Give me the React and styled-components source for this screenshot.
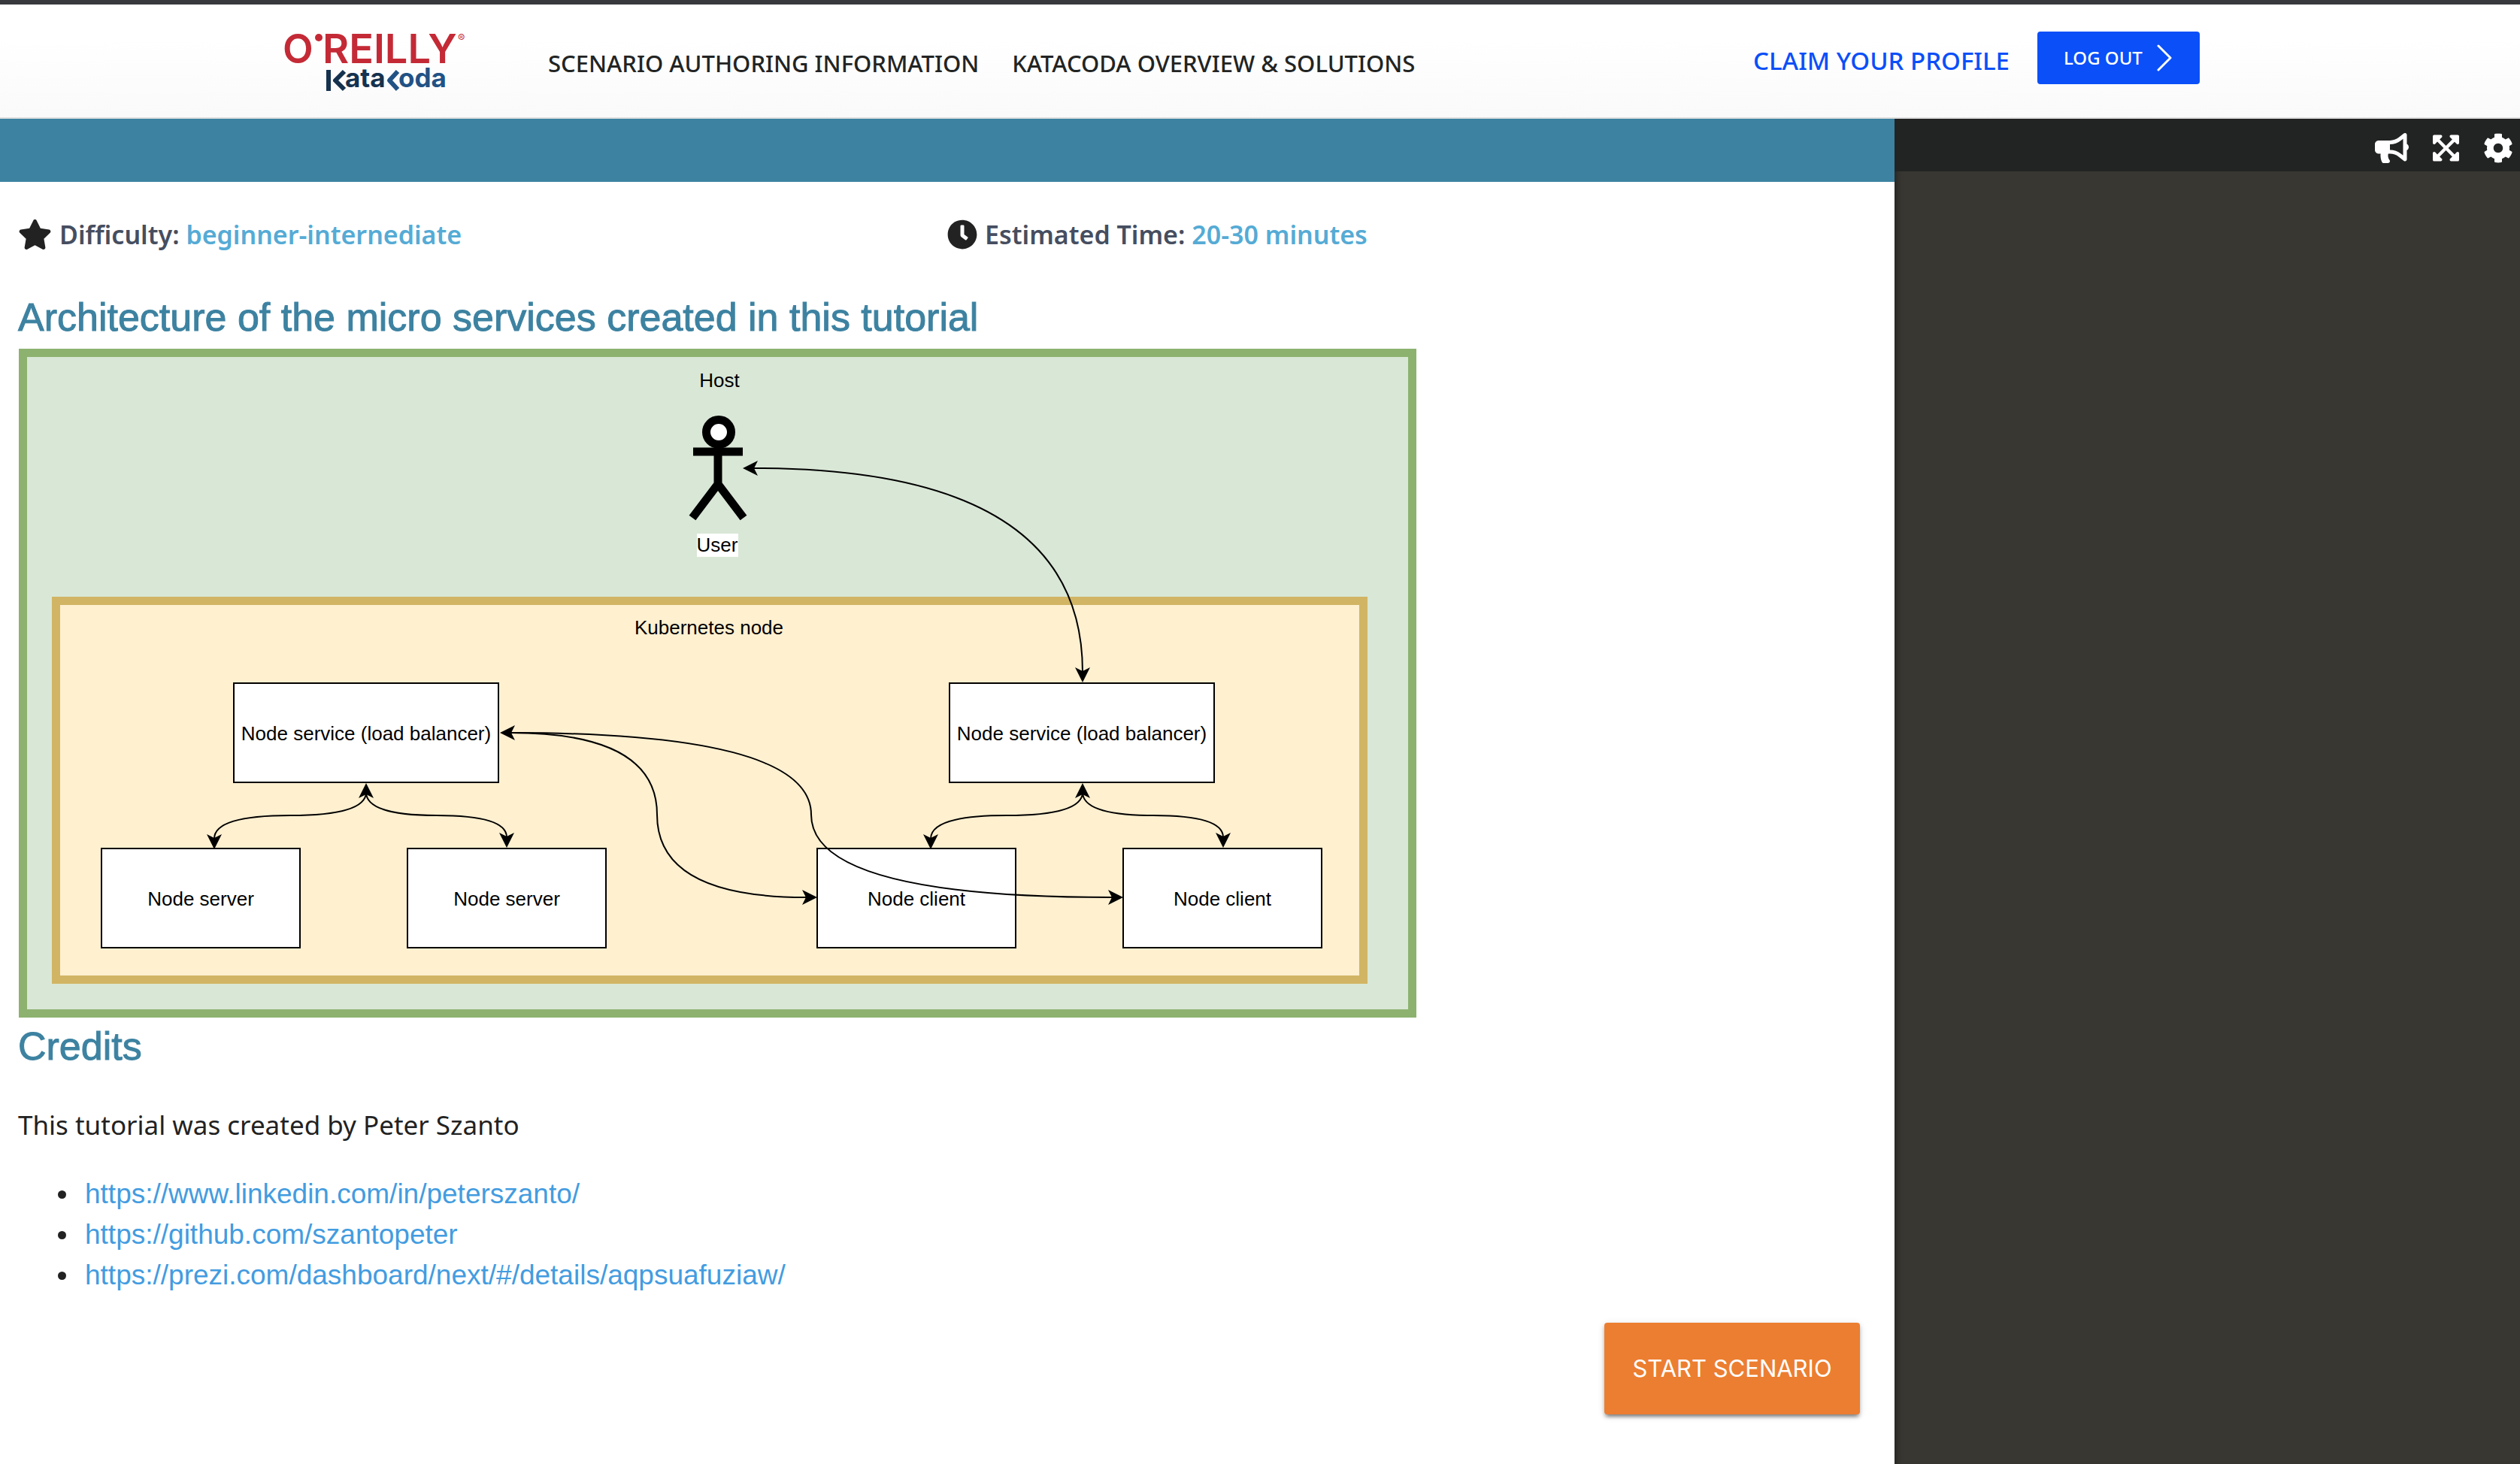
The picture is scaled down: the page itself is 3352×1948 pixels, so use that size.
import React from 'react';
import styled, { createGlobalStyle } from 'styled-components';
import { FaStar, FaClock, FaBullhorn, FaExpandArrowsAlt, FaCog } from 'react-icons/fa';

const ui = '"Noto Sans", sans-serif';
const grotesk = '"Liberation Sans", Arial, sans-serif';

const GlobalStyle = createGlobalStyle`
  *, *::before, *::after { box-sizing: border-box; }
  body { margin: 0; background: #fff; color: #222; font-family: ${ui}; }
  a { text-decoration: none; }
`;

const Page = styled.div`
  min-height: 100vh;
  display: flex;
  flex-direction: column;
`;

const Header = styled.header`
  border-top: 6px solid #37393d;
  border-bottom: 2px solid #e0e0e0;
  background: linear-gradient(#fff 30%, #fafafb);
`;

const HeaderInner = styled.div`
  display: flex;
  align-items: center;
  max-width: 2600px;
  height: 150px;
  margin: 0 auto;
`;

const LogoLink = styled.a`
  display: block;
  margin-right: 103px;

  svg {
    display: block;
  }
`;

const Nav = styled.nav`
  display: flex;
  gap: 44px;
  padding-top: 6px;
`;

const NavLink = styled.a`
  color: #222423;
  font-size: 31px;
  font-weight: 500;
  line-height: 42px;
  white-space: nowrap;
`;

const Account = styled.div`
  display: flex;
  align-items: center;
  gap: 37px;
  margin: 0 50px 8px auto;
`;

const ProfileLink = styled.a`
  padding-top: 8px;
  color: #0a4ff8;
  font-size: 33px;
  font-weight: 500;
  line-height: 42px;
  white-space: nowrap;
`;

const LogoutButton = styled.button`
  display: flex;
  align-items: center;
  justify-content: space-between;
  width: 216px;
  height: 70px;
  padding: 0 37px 0 35px;
  border: 0;
  border-radius: 4px;
  background: #0a4ff8;
  color: #fff;
  font: 500 24px/36px ${ui};
  cursor: pointer;
`;

const Workspace = styled.div`
  flex: 1;
  display: grid;
  grid-template-columns: minmax(0, 2520fr) minmax(0, 832fr);
`;

const Scenario = styled.main`
  display: flex;
  flex-direction: column;
`;

const TitleBand = styled.div`
  height: 84px;
  background: #3d82a1;
`;

const Content = styled.div`
  flex: 1;
  display: flex;
  flex-direction: column;
  padding: 48px 24px 66px;
`;

const MetaRow = styled.div`
  display: grid;
  grid-template-columns: 1fr 1fr;
  margin-bottom: 50px;
`;

const Icon = styled.span`
  display: block;
  flex: none;

  svg {
    display: block;
    width: ${(p) => p.$width || 40}px;
    height: 40px;
  }
`;

const Meta = styled.div`
  display: flex;
  align-items: center;
  gap: 10px;
  color: #464e60;
  font-size: 34px;
  font-weight: 600;
  line-height: 44px;

  svg {
    color: #222;
  }
`;

const MetaValue = styled.span`
  color: #55abd5;
`;

const Heading = styled.h2`
  margin: 0;
  padding-bottom: 4px;
  color: #3d82a1;
  font-family: ${grotesk};
  font-size: 52px;
  font-weight: 400;
  line-height: 76px;
  -webkit-text-stroke: 1px #3d82a1;
`;

const Diagram = styled.svg`
  display: block;
  width: 100%;
  max-width: 1860px;
  font-family: ${grotesk};
  font-size: 26px;
`;

const Paragraph = styled.p`
  margin: 36px 0 38px;
  font-size: 35px;
  line-height: 54px;
`;

const LinkList = styled.ul`
  margin: 0;
  padding-left: 82px;
  font-family: ${grotesk};
  font-size: 37px;
  line-height: 54px;
`;

const LinkItem = styled.li`
  padding-left: 7px;
`;

const TextLink = styled.a`
  color: #439ce0;
`;

const StartButton = styled.button`
  align-self: flex-end;
  width: 340px;
  height: 122px;
  margin: auto 22px 0 0;
  border: 0;
  border-radius: 4px;
  background: #ec7e31;
  color: #fff;
  font: 400 31px/40px Inter, sans-serif;
  box-shadow: 0 6px 4px -4px rgba(0, 0, 0, 0.3), 0 4px 4px rgba(0, 0, 0, 0.2), 0 2px 10px rgba(0, 0, 0, 0.16);
  cursor: pointer;
`;

const Terminal = styled.aside`
  background: #383732;
  box-shadow: inset 8px 0 8px -6px rgba(0, 0, 0, 0.4);
`;

const Toolbar = styled.div`
  display: flex;
  align-items: center;
  justify-content: flex-end;
  gap: 32px;
  height: 70px;
  padding: 8px 9px 0 0;
  background: #222423;
`;

const ToolButton = styled.button`
  padding: 0;
  border: 0;
  background: none;
  color: #fff;
  cursor: pointer;
`;

function Logo() {
  return (
    <svg width="250" height="112" viewBox="0 -13 250 112" role="img" aria-label="O'Reilly Katacoda">
      <g fill="#c42a36" fontFamily="Inter, sans-serif">
        <text x="0" y="46" fontSize="53" fontWeight="600">O</text>
        <circle cx="48" cy="12" r="5" />
        <text x="53" y="46" fontSize="54" fontWeight="600">REILLY</text>
        <text x="233" y="18" fontSize="14">®</text>
      </g>
      <g fill="none" strokeWidth="6" strokeLinejoin="round">
        <path d="M61 55V83" stroke="#15324f" />
        <path d="M82 57L70 69L82 81" stroke="#15324f" />
        <path d="M153 57L142 69L153 81" stroke="#215285" />
      </g>
      <g fontFamily="Inter, sans-serif" fontSize="35" fontWeight="700">
        <text x="83" y="78" fill="#15324f">ata</text>
        <text x="154" y="78" fill="#215285">oda</text>
      </g>
    </svg>
  );
}

const boxes = [
  { x: 287, y: 445, w: 352, label: 'Node service (load balancer)' },
  { x: 1239, y: 445, w: 352, label: 'Node service (load balancer)' },
  { x: 111, y: 665, w: 264, label: 'Node server' },
  { x: 518, y: 665, w: 264, label: 'Node server' },
  { x: 1063, y: 665, w: 264, label: 'Node client' },
  { x: 1470, y: 665, w: 264, label: 'Node client' },
];

const curves = [
  'M979 159Q1416 159 1416 430',
  'M463 590Q463 621 362 621Q261 621 261 652',
  'M463 590Q463 621 557 621Q650 621 650 650',
  'M1416 590Q1416 621 1315 621Q1214 621 1214 652',
  'M1416 590Q1416 621 1510 621Q1603 621 1603 650',
  'M655 511Q850 511 850 620Q850 730 1048 730',
  'M655 511Q1055 511 1055 620Q1055 730 1455 730',
];

// Tip position and rotation; 0 degrees points up.
const heads = [
  [964, 159, -90], [1416, 444, 180],
  [463, 578, 0], [261, 666, 180], [650, 664, 180],
  [1416, 578, 0], [1214, 666, 180], [1603, 664, 180],
  [641, 511, -90], [1063, 730, 90], [1470, 730, 90],
];

function Architecture() {
  return (
    <Diagram viewBox="0 0 1860 890" role="img" aria-label="Micro services architecture">
      <rect x="6.500" y="5.500" width="1848" height="879" fill="#d9e7d6" stroke="#8db270" strokeWidth="11" />
      <rect x="50.500" y="335.500" width="1739" height="504" fill="#fff0d0" stroke="#d1b564" strokeWidth="11" />
      <g fill="none" stroke="#000" strokeWidth="11">
        <circle cx="932" cy="111" r="16.500" fill="#fff" />
        <path d="M898 137H964M931 133V182M897 225L931 180L965 225" />
      </g>
      <rect x="903" y="246" width="55" height="31" fill="#fff" />
      {boxes.map((b) => (
        <rect key={b.x} x={b.x} y={b.y} width={b.w} height="132" fill="#fff" stroke="#000" strokeWidth="2" />
      ))}
      <g fill="none" stroke="#000" strokeWidth="2">
        {curves.map((d) => <path key={d} d={d} />)}
      </g>
      {heads.map(([x, y, r]) => (
        <path key={`${x}-${y}`} d="M0 0L10 20L0 15L-10 20Z" transform={`translate(${x} ${y}) rotate(${r})`} />
      ))}
      <g textAnchor="middle">
        <text x="933" y="51">Host</text>
        <text x="930" y="270">User</text>
        <text x="919" y="380">Kubernetes node</text>
        {boxes.map((b) => (
          <text key={b.x} x={b.x + b.w / 2} y={b.y + 76}>{b.label}</text>
        ))}
      </g>
    </Diagram>
  );
}

const links = [
  'https://www.linkedin.com/in/peterszanto/',
  'https://github.com/szantopeter',
  'https://prezi.com/dashboard/next/#/details/aqpsuafuziaw/',
];

export default function App() {
  return (
    <Page>
      <GlobalStyle />
      <Header>
        <HeaderInner>
          <LogoLink href="#"><Logo /></LogoLink>
          <Nav>
            <NavLink href="#">SCENARIO AUTHORING INFORMATION</NavLink>
            <NavLink href="#">KATACODA OVERVIEW &amp; SOLUTIONS</NavLink>
          </Nav>
          <Account>
            <ProfileLink href="#">CLAIM YOUR PROFILE</ProfileLink>
            <LogoutButton type="button">
              LOG OUT
              <svg width="20" height="36" viewBox="0 0 20 36" fill="none" stroke="#fff" strokeWidth="3" strokeLinecap="round" strokeLinejoin="round" aria-hidden="true">
                <path d="M2 2L18 18L2 34" />
              </svg>
            </LogoutButton>
          </Account>
        </HeaderInner>
      </Header>
      <Workspace>
        <Scenario>
          <TitleBand />
          <Content>
            <MetaRow>
              <Meta>
                <Icon $width={45}><FaStar aria-hidden="true" /></Icon>
                <span>Difficulty: <MetaValue>beginner-internediate</MetaValue></span>
              </Meta>
              <Meta>
                <Icon><FaClock aria-hidden="true" /></Icon>
                <span>Estimated Time: <MetaValue>20-30 minutes</MetaValue></span>
              </Meta>
            </MetaRow>
            <Heading>Architecture of the micro services created in this tutorial</Heading>
            <Architecture />
            <Heading>Credits</Heading>
            <Paragraph>This tutorial was created by Peter Szanto</Paragraph>
            <LinkList>
              {links.map((url) => (
                <LinkItem key={url}><TextLink href={url}>{url}</TextLink></LinkItem>
              ))}
            </LinkList>
            <StartButton type="button">START SCENARIO</StartButton>
          </Content>
        </Scenario>
        <Terminal>
          <Toolbar>
            <ToolButton type="button" aria-label="Announcements"><Icon $width={45}><FaBullhorn /></Icon></ToolButton>
            <ToolButton type="button" aria-label="Full screen"><Icon $width={35}><FaExpandArrowsAlt /></Icon></ToolButton>
            <ToolButton type="button" aria-label="Settings"><Icon><FaCog /></Icon></ToolButton>
          </Toolbar>
        </Terminal>
      </Workspace>
    </Page>
  );
}
